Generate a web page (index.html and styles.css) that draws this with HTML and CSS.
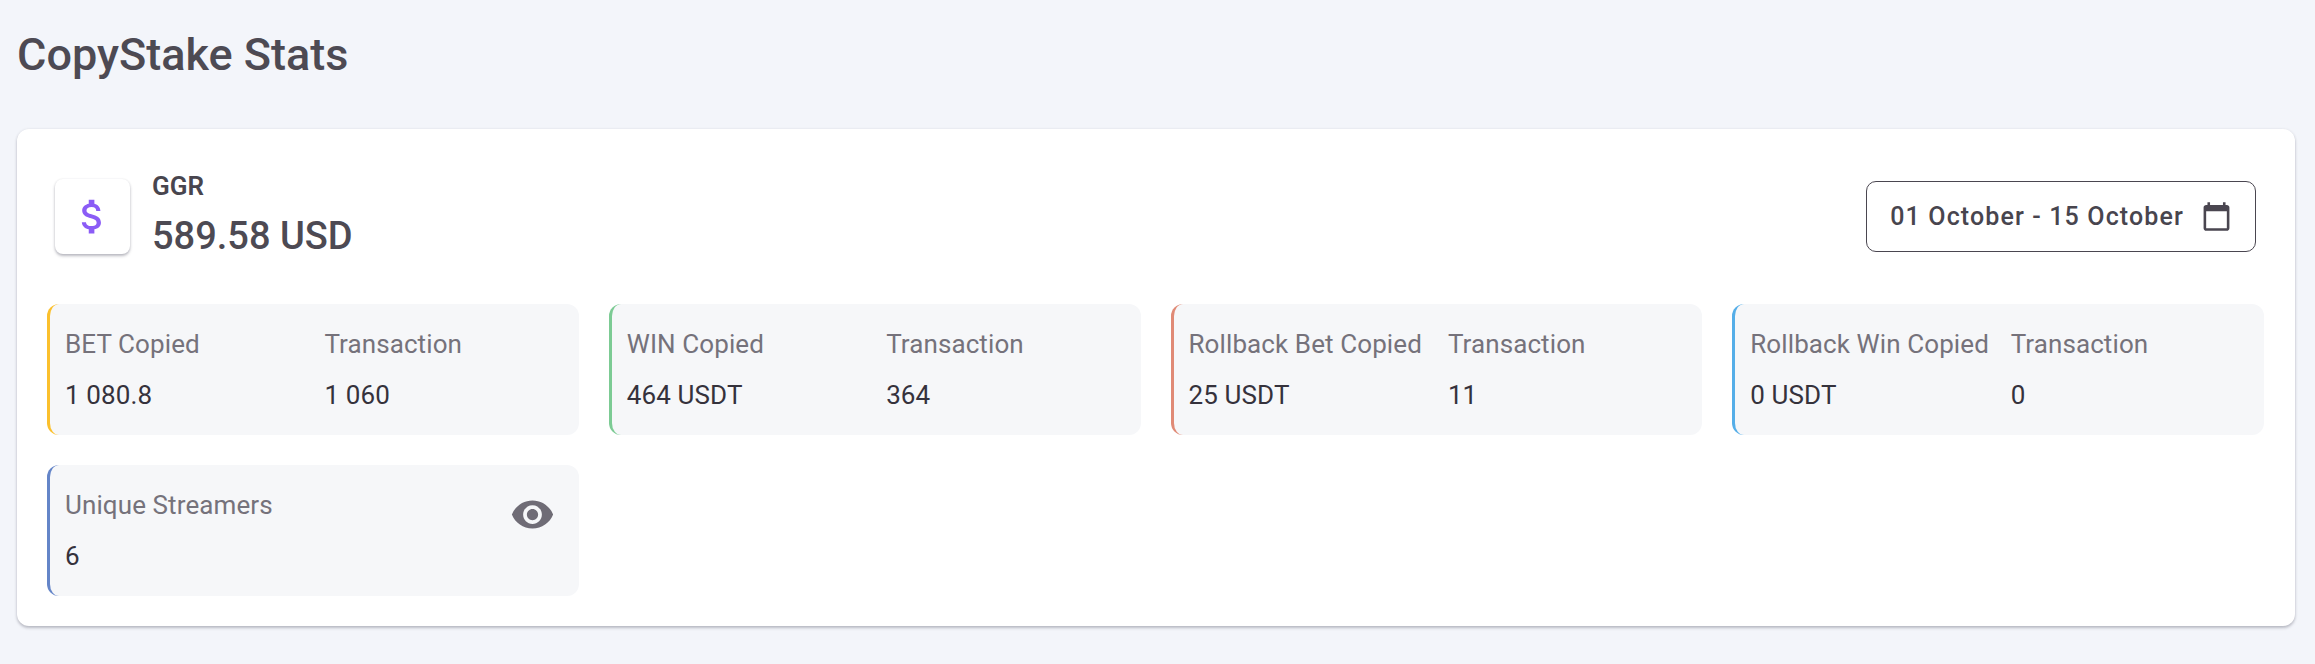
FILE: index.html
```html
<!DOCTYPE html>
<html lang="en">
<head>
<meta charset="utf-8">
<title>CopyStake Stats</title>
<link rel="stylesheet" href="styles.css">
</head>
<body>
<main class="page">
  <h1 class="title">CopyStake Stats</h1>
  <section class="card">
    <header class="card-head">
      <div class="ggr">
        <div class="ggr-icon">
          <svg viewBox="0 0 24 24" width="45" height="45"><path fill="#8b5cf6" d="M11.8 10.9c-2.27-.59-3-1.2-3-2.15 0-1.09 1.01-1.85 2.7-1.85 1.78 0 2.44.85 2.5 2.1h2.21c-.07-1.72-1.12-3.3-3.21-3.81V3h-3v2.16c-1.94.42-3.5 1.68-3.5 3.61 0 2.31 1.91 3.46 4.7 4.13 2.5.6 3 1.48 3 2.41 0 .69-.49 1.79-2.7 1.79-2.06 0-2.87-.92-2.98-2.1h-2.2c.12 2.19 1.76 3.42 3.68 3.83V21h3v-2.15c1.95-.37 3.5-1.5 3.5-3.55 0-2.84-2.43-3.81-4.7-4.4z"/></svg>
        </div>
        <div class="ggr-text">
          <div class="ggr-label">GGR</div>
          <div class="ggr-value">589.58 USD</div>
        </div>
      </div>
      <button class="date-btn" type="button">
        <span>01 October - 15 October</span>
        <svg viewBox="0 0 24 24" width="31" height="31"><path fill="#4a4650" d="M20 3h-1V1h-2v2H7V1H5v2H4c-1.1 0-2 .9-2 2v16c0 1.1.9 2 2 2h16c1.1 0 2-.9 2-2V5c0-1.100-.9-2-2-2zm0 18H4V8h16v13z"/></svg>
      </button>
    </header>
    <div class="tiles">
      <div class="tile yellow">
        <div class="tile-grid">
          <div class="label">BET Copied</div><div class="label">Transaction</div>
          <div class="value">1 080.8</div><div class="value">1 060</div>
        </div>
      </div>
      <div class="tile green">
        <div class="tile-grid">
          <div class="label">WIN Copied</div><div class="label">Transaction</div>
          <div class="value">464 USDT</div><div class="value">364</div>
        </div>
      </div>
      <div class="tile red">
        <div class="tile-grid">
          <div class="label">Rollback Bet Copied</div><div class="label">Transaction</div>
          <div class="value">25 USDT</div><div class="value">11</div>
        </div>
      </div>
      <div class="tile sky">
        <div class="tile-grid">
          <div class="label">Rollback Win Copied</div><div class="label">Transaction</div>
          <div class="value">0 USDT</div><div class="value">0</div>
        </div>
      </div>
      <div class="tile blue split">
        <div class="stack">
          <div class="label">Unique Streamers</div>
          <div class="value">6</div>
        </div>
        <svg class="eye" viewBox="0 0 24 24" width="45" height="45"><path fill="#6f6c76" d="M12 4.500C7 4.500 2.730 7.610 1 12c1.730 4.390 6 7.500 11 7.500s9.270-3.110 11-7.500c-1.730-4.390-6-7.500-11-7.500zM12 17c-2.760 0-5-2.240-5-5s2.240-5 5-5 5 2.240 5 5-2.240 5-5 5zm0-8c-1.660 0-3 1.340-3 3s1.340 3 3 3 3-1.340 3-3-1.340-3-3-3z"/></svg>
      </div>
    </div>
  </section>
</main>
</body>
</html>
```
FILE: styles.css
```css
* { box-sizing: border-box; }
html, body { margin: 0; height: 100%; }
body {
  background: #f3f5fa;
  font-family: Roboto, "Liberation Sans", sans-serif;
  color: #48454e;
}
.page { padding: 30px 20px 0 17px; }
.title {
  margin: 0 0 49px;
  font-size: 45px;
  line-height: 50px;
  font-weight: 500;
  color: #4d4a53;
}
.card {
  background: #fff;
  border-radius: 12px;
  box-shadow: 0 2px 3px rgba(60, 60, 80, .3), 0 0 3px rgba(60, 60, 80, .08);
  padding: 42px 31px 30px 30px;
  height: 497px;
}
.card-head {
  display: flex;
  justify-content: space-between;
  align-items: flex-start;
  height: 133px;
}
.ggr { display: flex; gap: 22px; margin-left: 8px; }
.ggr-icon {
  width: 75px;
  height: 75px;
  margin-top: 8px;
  border-radius: 8px;
  background: #fff;
  box-shadow: 0 2px 3px rgba(60, 60, 80, .35), 0 0 2px rgba(60, 60, 80, .1);
  display: flex;
  align-items: center;
  justify-content: center;
}
.ggr-label { font-size: 26px; line-height: 30px; font-weight: 600; }
.ggr-value { font-size: 38px; line-height: 44px; font-weight: 500; margin-top: 13px; color: #4d4a53; }
.date-btn {
  display: flex;
  align-items: center;
  gap: 17px;
  height: 71px;
  margin: 10px 8px 0 0;
  padding: 0 23px 0 23px;
  background: #fff;
  border: 1px solid #4a4650;
  border-radius: 10px;
  font: 500 25px Roboto, sans-serif;
  letter-spacing: 1.13px;
  color: #48454e;
}
.tiles {
  display: grid;
  grid-template-columns: repeat(4, 1fr);
  gap: 30px;
}
.tile {
  height: 131px;
  background: #f6f7f9;
  border-radius: 12px;
  border-left: 3px solid;
  padding: 25px 15px 0;
}
.yellow { border-left-color: #fbc02d; }
.green { border-left-color: #7ccb94; }
.red { border-left-color: #e08a76; }
.sky { border-left-color: #55aee8; }
.blue { border-left-color: #6485c8; }
.tile-grid {
  display: grid;
  grid-template-columns: minmax(0, 1fr) 1fr;
  column-gap: 20px;
}
.sky .tile-grid { column-gap: 22px; }
.split { display: flex; justify-content: space-between; align-items: flex-start; }
.eye { margin-top: 2px; margin-right: 9px; }
.label { font-size: 26px; line-height: 30px; letter-spacing: .1px; color: #75727b; margin-bottom: 21px; white-space: nowrap; }
.value { font-size: 26px; line-height: 30px; letter-spacing: .12px; color: #35323c; white-space: nowrap; }
```
